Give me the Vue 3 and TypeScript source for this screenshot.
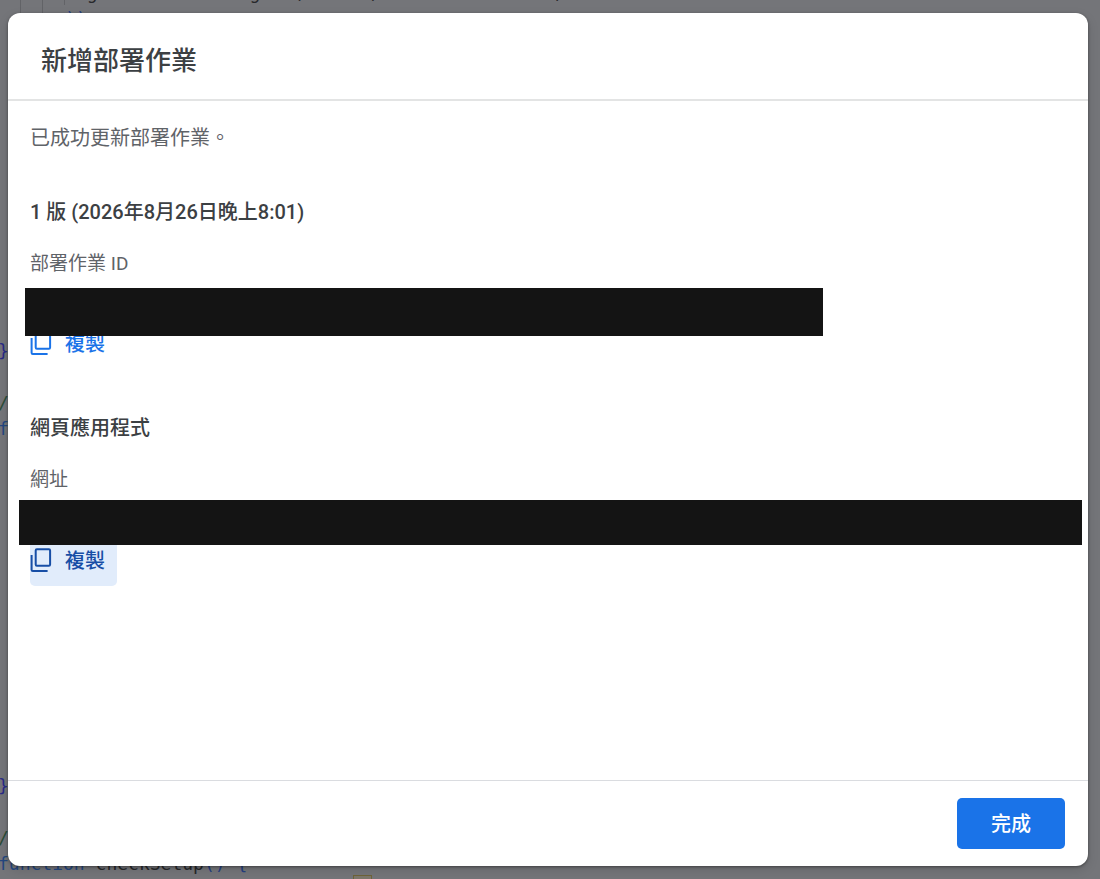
<script setup lang="ts">
interface Deployment {
  id: string
  heading: string
  label: string
  active: boolean
}

const deployments: Deployment[] = [
  { id: 'version', heading: '1 版 (2026年8月26日晚上8:01)', label: '部署作業 ID', active: false },
  { id: 'webapp', heading: '網頁應用程式', label: '網址', active: true },
]
</script>

<template>
  <div class="screen">
    <div class="editor" aria-hidden="true">
      <span class="guide first"></span>
      <span class="guide second"></span>
      <span class="guide third"></span>
      <pre class="code top"><span>       g              g   (      ,                ,</span>
<span class="bracket">     ))</span></pre>
      <pre class="code middle"><span class="brace">}</span>

<span class="comment">/</span>
<span class="keyword">f</span></pre>
      <pre class="code bottom"><span class="brace">}</span>

<span class="comment">/</span>
<span class="keyword">function</span> checkSetup<span class="bracket">() {</span></pre>
      <span class="marker"></span>
    </div>

    <main class="dialog" role="dialog" aria-labelledby="dialog-title">
      <header class="header">
        <h1 id="dialog-title">新增部署作業</h1>
      </header>

      <div class="body">
        <p class="message">已成功更新部署作業。</p>
        <section v-for="item in deployments" :key="item.id" class="section" :class="item.id">
          <h2>{{ item.heading }}</h2>
          <p class="label">{{ item.label }}</p>
          <div class="value"><span class="redaction"></span></div>
          <button type="button" class="copy" :class="{ active: item.active }">
            <svg width="22" height="25" viewBox="0 0 22 25" fill="none" stroke="currentColor" stroke-width="2" aria-hidden="true">
              <rect x="5.7" y="1.2" width="14.4" height="16.6" rx="1.2" />
              <path d="M1.6 7V21.8Q1.6 23 2.8 23H17.6" />
            </svg>
            <span>複製</span>
          </button>
        </section>
      </div>

      <footer class="footer">
        <button type="button" class="done">完成</button>
      </footer>
    </main>
  </div>
</template>

<style>
body {
  margin: 0;
}
</style>

<style scoped>
.screen {
  box-sizing: border-box;
  position: relative;
  display: flex;
  min-height: 100vh;
  padding: 13px 12px 13px 8px;
  overflow: hidden;
  background: #747579;
  font-family: Roboto, "Noto Sans CJK TC", sans-serif;
}

.editor {
  position: absolute;
  inset: 0;
  overflow: hidden;
}

.code {
  position: absolute;
  left: -2px;
  margin: 0;
  color: #27282b;
  font: 18px/26px "DejaVu Sans Mono", monospace;
}

.code.top {
  top: -20px;
  left: 11px;
}

.code.middle {
  top: 338px;
}

.code.bottom {
  top: 773px;
}

.brace {
  color: #282a86;
}

.bracket {
  color: #243f80;
}

.keyword {
  color: #24477f;
}

.comment {
  color: #2b4c38;
}

.guide {
  position: absolute;
  top: 0;
  width: 1px;
  height: 13px;
  background: #626367;
}

.guide.first {
  left: 20px;
}

.guide.second {
  left: 42px;
}

.guide.third {
  left: 64px;
  height: 5px;
}

.marker {
  position: absolute;
  top: 875px;
  left: 353px;
  box-sizing: border-box;
  width: 19px;
  height: 20px;
  border: 1px solid #6f6339;
  background: #7c776a;
}

.dialog {
  position: relative;
  display: flex;
  flex: 1;
  flex-direction: column;
  min-width: 0;
  border-radius: 12px;
  background: #fff;
  box-shadow: 0 1px 3px rgba(0, 0, 0, 0.4), 0 4px 12px rgba(0, 0, 0, 0.12);
}

.header {
  padding: 34px 33px 24px;
  border-bottom: 2px solid #e3e4e4;
}

h1 {
  margin: 0;
  color: #3c4043;
  font-size: 26px;
  font-weight: 500;
  line-height: 28px;
}

.body {
  flex: 1;
  padding: 23px 22px 20px;
}

.message {
  margin: 0 0 46px;
  color: #5f6368;
  font-size: 20px;
  line-height: 28px;
}

.section {
  margin-bottom: 45px;
}

h2 {
  margin: 0 0 24px;
  color: #3c4043;
  font-size: 20px;
  font-weight: 500;
  line-height: 28px;
}

.label {
  margin: 0;
  color: #5f6368;
  font-size: 19px;
  line-height: 28px;
}

.value {
  position: relative;
  height: 30px;
  margin-top: 10px;
}

.redaction {
  position: absolute;
  z-index: 1;
  top: 0;
  left: -5px;
  width: 77%;
  height: 48px;
  background: #141414;
}

.webapp .value {
  height: 35px;
  margin-top: 6px;
}

.webapp .redaction {
  right: -16px;
  left: -11px;
  width: auto;
  height: 45px;
}

.copy,
.done {
  border: 0;
  border-radius: 5px;
  font-family: inherit;
  font-size: 20px;
  font-weight: 500;
  line-height: 28px;
  cursor: pointer;
}

.copy {
  display: flex;
  align-items: center;
  gap: 13px;
  height: 51px;
  padding: 0 12px 0 0;
  background: transparent;
  color: #1a73e8;
}

.copy.active {
  background: #e1ecfb;
  color: #174ea6;
}

.footer {
  display: flex;
  justify-content: flex-end;
  padding: 17px 23px;
  border-top: 1px solid #dadce0;
}

.done {
  height: 51px;
  padding: 0 34px;
  background: #1a73e8;
  color: #fff;
}
</style>
